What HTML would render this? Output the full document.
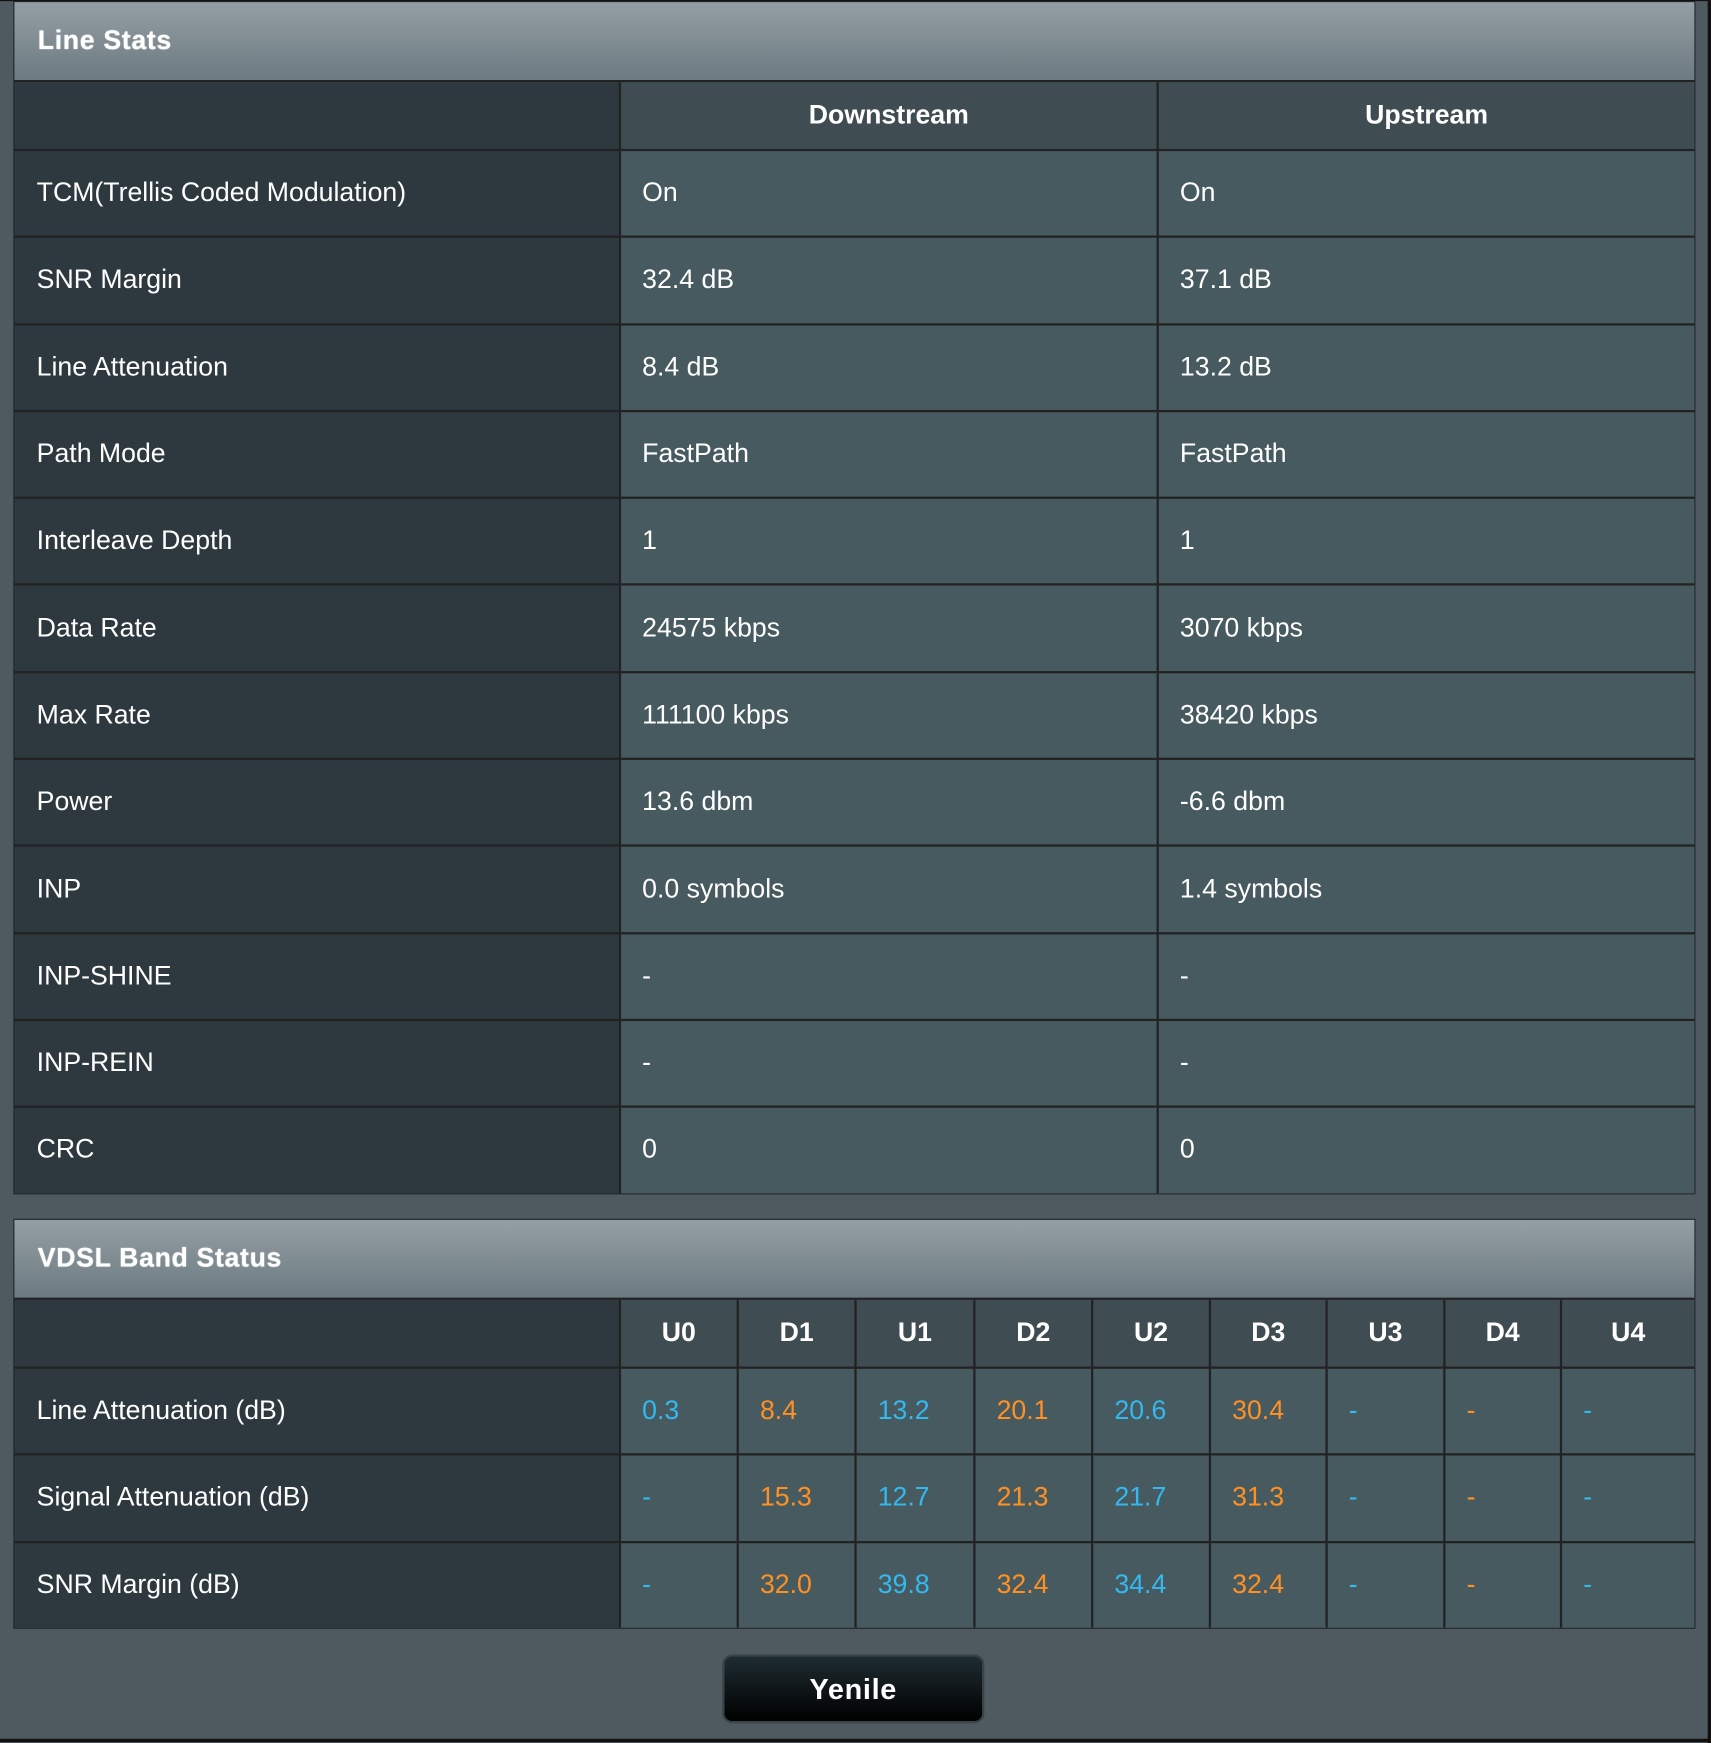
<!DOCTYPE html>
<html><head><meta charset="utf-8"><style>
html,body{margin:0;padding:0;width:1711px;height:1742px;overflow:hidden;background:#4d5960;}
#w{position:absolute;left:0;top:0;width:1540px;height:1568px;transform:scale(1.11104);transform-origin:0 0;font-family:"Liberation Sans",Arial,sans-serif;color:#fff;background:#4e5a60;border-top:1px solid #111;box-sizing:border-box;}
#edge{position:absolute;right:0;top:0;width:3px;height:1568px;background:#111;}
#edgeb{position:absolute;left:0;bottom:0;width:1540px;height:3px;background:#111;}
.box{position:absolute;left:12px;width:1514px;border:1px solid #1e2326;box-sizing:border-box;}
.hd{height:70px;background:linear-gradient(#949fa4,#6c7a81);font-weight:bold;font-size:24px;line-height:70px;padding-left:21px;border-bottom:2px solid #222;text-shadow:0 0 1px #fff;letter-spacing:0.6px;}
table{border-collapse:collapse;width:100%;table-layout:fixed;}
td{border:2px solid #222;font-size:24px;height:76.3px;padding:0 0 0 19px;background:#475a60;}
td.l{background:#2e393f;padding-left:20px;border-left:none;}
tr.h td{background:#3f4d53;font-weight:bold;text-align:center;height:60px;padding:0;}
tr.h td.l{background:#2e393f;}
tr:first-child td{border-top:none;}
tr:last-child td{border-bottom:none;}
td:last-child{border-right:none;}
.b{color:#33b9ef}.o{color:#ff9124}
#btn{position:absolute;left:650px;top:1488px;width:236px;height:62px;border-radius:9px;background:linear-gradient(#1e2c31,#000);border:2px solid #3a4448;box-sizing:border-box;font-weight:bold;font-size:26px;text-align:center;line-height:58px;letter-spacing:0.6px;}
</style></head><body><div id="w">
<div class="box" style="top:0;">
<div class="hd">Line Stats</div>
<table><colgroup><col style="width:545px"><col style="width:484px"><col></colgroup>
<tr class="h"><td class="l"></td><td>Downstream</td><td>Upstream</td></tr>
<tr><td class="l">TCM(Trellis Coded Modulation)</td><td>On</td><td>On</td></tr>
<tr><td class="l">SNR Margin</td><td>32.4 dB</td><td>37.1 dB</td></tr>
<tr><td class="l">Line Attenuation</td><td>8.4 dB</td><td>13.2 dB</td></tr>
<tr><td class="l">Path Mode</td><td>FastPath</td><td>FastPath</td></tr>
<tr><td class="l">Interleave Depth</td><td>1</td><td>1</td></tr>
<tr><td class="l">Data Rate</td><td>24575 kbps</td><td>3070 kbps</td></tr>
<tr><td class="l">Max Rate</td><td>111100 kbps</td><td>38420 kbps</td></tr>
<tr><td class="l">Power</td><td>13.6 dbm</td><td>-6.6 dbm</td></tr>
<tr><td class="l">INP</td><td>0.0 symbols</td><td>1.4 symbols</td></tr>
<tr><td class="l">INP-SHINE</td><td>-</td><td>-</td></tr>
<tr><td class="l">INP-REIN</td><td>-</td><td>-</td></tr>
<tr><td class="l">CRC</td><td>0</td><td>0</td></tr>
</table></div>
<div class="box" style="top:1096px;">
<div class="hd">VDSL Band Status</div>
<table><colgroup><col style="width:545px"><col style="width:106px"><col style="width:106px"><col style="width:107px"><col style="width:106px"><col style="width:106px"><col style="width:105px"><col style="width:106px"><col style="width:105px"><col></colgroup>
<tr class="h"><td class="l"></td><td>U0</td><td>D1</td><td>U1</td><td>D2</td><td>U2</td><td>D3</td><td>U3</td><td>D4</td><td>U4</td></tr>
<tr><td class="l">Line Attenuation (dB)</td><td class="b">0.3</td><td class="o">8.4</td><td class="b">13.2</td><td class="o">20.1</td><td class="b">20.6</td><td class="o">30.4</td><td class="b">-</td><td class="o">-</td><td class="b">-</td></tr>
<tr><td class="l">Signal Attenuation (dB)</td><td class="b">-</td><td class="o">15.3</td><td class="b">12.7</td><td class="o">21.3</td><td class="b">21.7</td><td class="o">31.3</td><td class="b">-</td><td class="o">-</td><td class="b">-</td></tr>
<tr><td class="l">SNR Margin (dB)</td><td class="b">-</td><td class="o">32.0</td><td class="b">39.8</td><td class="o">32.4</td><td class="b">34.4</td><td class="o">32.4</td><td class="b">-</td><td class="o">-</td><td class="b">-</td></tr>
</table></div>
<div id="btn">Yenile</div>
<div id="edge"></div><div id="edgeb"></div>
</div></body></html>
